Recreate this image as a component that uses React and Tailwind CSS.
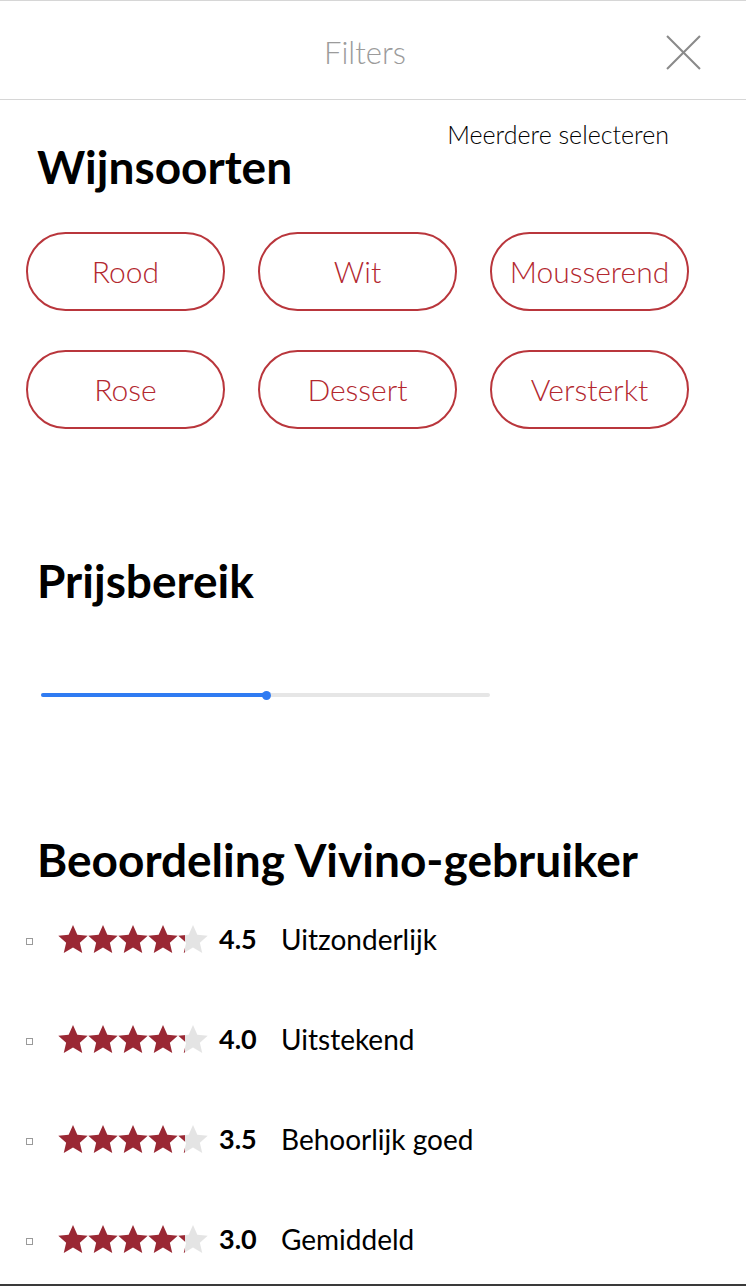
import { useState } from 'react';

const wineTypes = ['Rood', 'Wit', 'Mousserend', 'Rose', 'Dessert', 'Versterkt'];

const ratings = [
  { value: '4.5', label: 'Uitzonderlijk' },
  { value: '4.0', label: 'Uitstekend' },
  { value: '3.5', label: 'Behoorlijk goed' },
  { value: '3.0', label: 'Gemiddeld' },
];

const STAR = 'M12 1.5l3.1 6.9 7.4.7-5.6 5 1.7 7.4L12 17.6l-6.6 3.9 1.7-7.4-5.6-5 7.4-.7z';

const Star = ({ fill = 1, id }) => (
  <svg viewBox="1.5 1.5 21 20" className="w-[30px] h-[28px]">
    {fill < 1 && (
      <defs>
        <linearGradient id={id} x1="0" x2="1" y1="0" y2="0">
          <stop offset={`${fill * 100}%`} stopColor="#9a2834" />
          <stop offset={`${fill * 100}%`} stopColor="#e4e4e4" />
        </linearGradient>
      </defs>
    )}
    <path d={STAR} fill={fill < 1 ? `url(#${id})` : '#9a2834'} />
  </svg>
);

const Stars = ({ idx }) => (
  <div className="flex items-center">
    {[0, 1, 2, 3].map(i => <Star key={i} />)}
    <Star fill={0.24} id={`half-${idx}`} />
  </div>
);

const App = () => {
  const [selected, setSelected] = useState([]);
  const toggle = t => setSelected(s => (s.includes(t) ? s.filter(x => x !== t) : [...s, t]));

  return (
    <div className="w-[746px] h-[1286px] bg-white overflow-hidden border-b-2 border-[#3a3a3a] font-['Lato',sans-serif] text-black">
      {/* Header */}
      <div className="h-[100px] pt-[4px] border-t border-b border-[#d6d6d6] grid grid-cols-[1fr_auto_1fr] items-center">
        <div />
        <div className="text-[31px] font-light text-[#9b9b9b] pr-[16px]">Filters</div>
        <div className="flex justify-end pr-[45px]">
          <svg viewBox="0 0 34 34" className="w-[35px] h-[35px]" stroke="#8a8a8a" strokeWidth="2" fill="none">
            <path d="M1 1L33 33M33 1L1 33" />
          </svg>
        </div>
      </div>

      {/* Wine types */}
      <div className="flex justify-end pr-[77px] pt-[22px]">
        <span className="text-[25px] font-light leading-none">Meerdere selecteren</span>
      </div>
      <h2 className="pl-[37px] -mt-[3px] text-[46px] font-bold leading-none">Wijnsoorten</h2>
      <div className="grid grid-cols-[199px_199px_199px] gap-x-[33px] gap-y-[39px] pl-[26px] mt-[42px]">
        {wineTypes.map(t => (
          <button
            key={t}
            onClick={() => toggle(t)}
            className={`h-[79px] rounded-full border-2 border-[#b9363c] text-[30px] font-light ${selected.includes(t) ? 'bg-[#b3282f] text-white' : 'text-[#b3282f]'}`}
          >
            {t}
          </button>
        ))}
      </div>

      {/* Price */}
      <h2 className="pl-[37px] mt-[129px] text-[46px] font-bold leading-none">Prijsbereik</h2>
      <div className="pl-[41px] mt-[89px]">
        <div className="relative w-[449px] h-[4px] rounded-full bg-[#e6e6e6]">
          <div className="h-full w-[225px] rounded-full bg-[#2f7bf2]" />
          <div className="absolute left-[221px] top-[-2.5px] w-[9px] h-[9px] rounded-full bg-[#2f7bf2]" />
        </div>
      </div>

      {/* Rating */}
      <h2 className="pl-[37px] mt-[140px] text-[46px] font-bold leading-none">Beoordeling Vivino-gebruiker</h2>
      <div className="mt-[6px] flex flex-col">
        {ratings.map((r, i) => (
          <div key={r.value} className="h-[100px] flex items-center pl-[26px]">
            <span className="w-[7px] h-[7px] border border-[#9a9a9a] mt-[5px]" />
            <div className="ml-[25px]"><Stars idx={i} /></div>
            <span className="ml-[11px] text-[27px] font-bold w-[40px]">{r.value}</span>
            <span className="ml-[22px] text-[28px]">{r.label}</span>
          </div>
        ))}
      </div>
    </div>
  );
};

export default App;
